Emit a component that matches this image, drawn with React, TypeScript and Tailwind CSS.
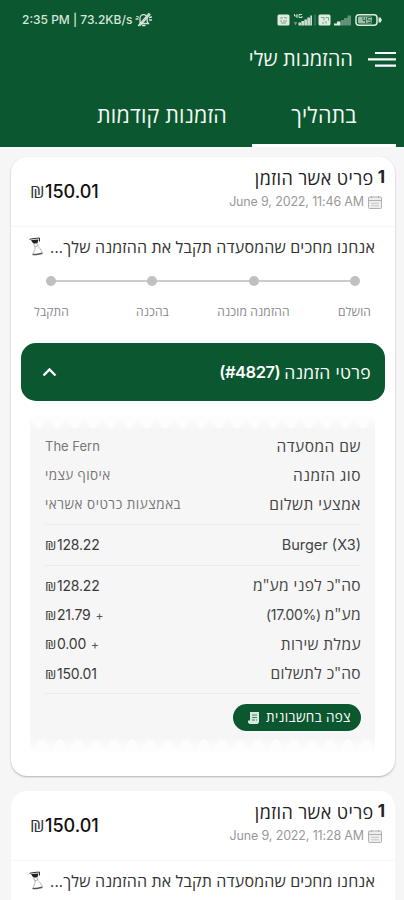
import { clsx } from 'clsx';

type Order = { date: string; open: boolean };

const orders: Order[] = [
  { date: 'June 9, 2022, 11:46 AM', open: true },
  { date: 'June 9, 2022, 11:28 AM', open: false },
];

const steps = ['הושלם', 'ההזמנה מוכנה', 'בהכנה', 'התקבל'];

const info = [
  { label: 'שם המסעדה', value: 'The Fern', cls: 'text-[13px] font-[Inter]' },
  { label: 'סוג הזמנה', value: 'איסוף עצמי', cls: 'text-[13.5px] tracking-[0.4px]' },
  { label: 'אמצעי תשלום', value: 'באמצעות כרטיס אשראי', cls: 'text-[13.5px] tracking-[0.52px]' },
];

const totals = [
  { label: 'סה"כ לפני מע"מ', rate: '', value: '128.22', plus: false },
  { label: 'מע"מ', rate: '(17.00%)', value: '21.79', plus: true },
  { label: 'עמלת שירות', rate: '', value: '0.00', plus: true },
  { label: 'סה"כ לתשלום', rate: '', value: '150.01', plus: false },
];

function BellOff() {
  return (
    <svg width="18" height="15" viewBox="0 0 18 15" fill="none" stroke="#d5e5da" strokeWidth="1.3" strokeLinecap="round">
      <path d="M5 11.5h8.5l-1.3-2V6.2a3.6 3.6 0 0 0-7.2 0v3.3zM7.5 13.5h2.5M3.5 13.5 14 1.5M1 7h2M1.8 4.5l1.6.5M14.5 5.5l2-.5M14.5 8h2" />
      <path d="m5 13.5 10-11" />
    </svg>
  );
}

function StatusIcons() {
  return (
    <svg width="106" height="14" viewBox="0 0 106 14" fill="#dfeae2">
      <rect x="0.5" y="1.5" width="12" height="11" rx="1.5" />
      <path d="M3 5h3M7 4.5l3 .5M3 8h2M6 8h4M4 10h5" stroke="#7aa38b" strokeWidth="1" fill="none" />
      <path d="M17.5 1v2h2.5M20 1v4M25 1.5h-3v3h3V3" stroke="#dfeae2" strokeWidth=".9" fill="none" />
      <path d="M17 9h3v1.500h-1V12h-1v-1.500h-1z" opacity=".45" />
      <path d="M21.500 9.500H24v3h-2.500zM24.300 8H27v4.500h-2.700zM27.300 6.500H30v6h-2.700zM30.300 4.500H33v8h-2.700zM33.300 2.500H35v10h-1.700z" opacity=".9" />
      <path d="M37.500 1.500h1v11h-1z" opacity=".35" />
      <rect x="41.500" y="1.500" width="12" height="11" rx="1.500" />
      <path d="M44 4.500h3v3M48.500 4.500h3v3M45 10h2M49 8v2.500" stroke="#7aa38b" strokeWidth="1" fill="none" />
      <path d="M57 10.500h3v2h-3zM60 8.500h3.500v4H60z" />
      <path d="M64 7h3v5.500h-3zM67 5h3.500v7.500H67zM70.500 2.500H74v10h-3.500z" opacity=".4" />
      <rect x="79" y="1.700" width="21" height="10.500" rx="3" fill="none" stroke="#dfeae2" strokeWidth="1.500" />
      <rect x="81" y="3.500" width="14" height="7" rx="1.500" opacity=".7" />
      <path d="M86 4v3.500h3M88.500 4.500v5.500M94 4.500h-3.500v2.500H94v2.500h-3.500" stroke="#2c6d4a" strokeWidth="1" fill="none" />
      <path d="M101.500 4.500h2l1.500 2.500-1.500 2.500h-2z" />
    </svg>
  );
}

function Calendar() {
  return (
    <svg width="14" height="13" viewBox="0 0 14 13" fill="none" stroke="#b0b0b0" strokeWidth="1">
      <rect x=".5" y="1" width="13" height="11.500" rx="1" fill="#eeeeee" />
      <path d="M.5 4.500h13M3.500 0v2M10.500 0v2" />
      <path d="M3 7.300h8M3 9.800h8" stroke="#c8c8c8" />
    </svg>
  );
}

// Takeaway waiter figure next to the status message
function Figure() {
  return (
    <svg width="15" height="19" viewBox="0 0 15 19" fill="none" stroke="#333" strokeLinejoin="round">
      <path d="M2 3 9.500 2.500 8.500 6 5.500 6.800 3.500 5.500z" fill="#222" stroke="none" />
      <path d="M.5 2.300 5 1.500 10.500 1M10.500 1v3.500" strokeWidth="1" />
      <path d="m4.500 6.500 1.500 3.500 3-1.500L7.500 6" strokeWidth=".7" stroke="#888" />
      <path d="M6 10v2.500l-2 4M9 9.500l2.300 2.300 2 4" strokeWidth=".8" stroke="#aaa" />
      <path d="M3.500 17.500h4l6-1.300" strokeWidth="1.400" stroke="#555" />
    </svg>
  );
}

function Scallops({ bottom }: { bottom?: boolean }) {
  return (
    <svg className={clsx('block', bottom && 'rotate-180')} width="345" height="14" viewBox="0 0 345 14">
      <defs>
        <pattern id="scallop" width="18" height="14" patternUnits="userSpaceOnUse">
          <path d="M0 0h18v3q-3 1-5 7-4 5-8 0Q3 4 0 3z" fill="#fdfdfd" />
        </pattern>
        <linearGradient id="fade" x1="0" y1="0" x2="0" y2="1">
          <stop offset="0" stopColor="#fdfdfd" />
          <stop offset="1" stopColor="#f6f6f6" />
        </linearGradient>
      </defs>
      <rect width="345" height="14" fill="url(#fade)" />
      <rect width="345" height="14" fill="url(#scallop)" />
    </svg>
  );
}

function Price({ value, plus }: { value: string; plus?: boolean }) {
  return (
    <span dir="ltr" className="flex items-baseline font-[Inter] text-[14px] tracking-[-0.2px] text-[#3a3a3a]">
      <span className="inline-block w-[12px] origin-left scale-x-115 font-['Open_Sans'] text-[12.5px]">₪</span>
      {value}
      {plus && <span className="ml-[5px] text-[12px] text-[#555]">+</span>}
    </span>
  );
}

function Receipt() {
  return (
    <div className="ml-[19px] mr-[20px] mt-[15px]">
      <Scallops />
      <div className="h-[308px] bg-[#f6f6f6] pl-[15px] pr-[14px]">
        <div className="flex h-[95px] flex-col border-b border-[#ebebeb] pt-[2px]">
          {info.map((row) => (
            <div key={row.label} className="flex h-[29px] items-center justify-between">
              <span className="text-[15.5px] tracking-[0.5px] text-[#444]">{row.label}</span>
              <span className={clsx('text-[#777]', row.cls)}>{row.value}</span>
            </div>
          ))}
        </div>
        <div className="flex h-[41px] items-center justify-between border-b border-[#ebebeb] text-[#444]">
          <span dir="ltr" className="font-[Inter] text-[14.5px]">Burger (X3)</span>
          <Price value="128.22" />
        </div>
        <div className="flex h-[128px] flex-col border-b border-[#ebebeb] pt-[5px]">
          {totals.map((row) => (
            <div key={row.label} className="flex h-[29.300px] items-center justify-between">
              <span className="flex items-center gap-[4px] text-[15.5px] tracking-[0.4px] text-[#444]">
                {row.label}
                {row.rate && <span dir="ltr" className="font-[Inter] text-[14px] tracking-[-0.3px]">{row.rate}</span>}
              </span>
              <Price value={row.value} plus={row.plus} />
            </div>
          ))}
        </div>
        <button className="mt-[10px] flex h-[27px] w-[128px] items-center justify-between whitespace-nowrap rounded-full bg-[#0b5730] pl-[15px] pr-[10px] text-[13.5px] font-medium tracking-[0.35px] text-white">
          <span>צפה בחשבונית</span>
          <svg width="11" height="12" viewBox="0 0 11 12">
            <path d="M2 0h9v10.500L9.500 12H1.500L0 10.500V8.500h2z" fill="#d8e8dc" />
            <path d="M4 3h5M4 5.500h5M4 8h3M8 8h1" stroke="#4a8265" strokeWidth="1" />
          </svg>
        </button>
      </div>
      <Scallops bottom />
    </div>
  );
}

function OrderCard({ order }: { order: Order }) {
  return (
    <article className={clsx('w-[384px] shrink-0 rounded-2xl bg-white', order.open ? 'h-[619px] shadow-[0_1px_2px_rgba(0,0,0,0.28)]' : 'h-[300px]')}>
      <div className="flex h-[70px] items-start justify-between border-b border-[#f7f7f7] pl-[19px] pr-[10px]">
        <div className="pt-[8px]">
          <div className="flex h-[26px] items-center gap-[4px] text-[#222]">
            <b className="font-[Inter] text-[17px] font-bold">1</b>
            <span className="text-[18px] tracking-[0.4px]">פריט אשר הוזמן</span>
          </div>
          <div className="flex h-[22px] items-center gap-[4px] pr-[3px]">
            <Calendar />
            <span dir="ltr" className="font-[Inter] text-[12.500px] tracking-[-0.150px] text-[#999]">{order.date}</span>
          </div>
        </div>
        <div dir="ltr" className="flex items-baseline pt-[22px] font-[Inter] text-[18px] font-medium leading-[26px] text-[#111]">
          <span className="inline-block w-[15px] origin-left scale-x-115 font-['Open_Sans'] text-[16px] font-normal text-[#333]">₪</span>
          150.01
        </div>
      </div>
      <div className="flex h-[39px] items-center justify-between pl-[18px] pr-[20px]">
        <span className="whitespace-nowrap text-[16px] tracking-[0.160px] text-[#333]">אנחנו מחכים שהמסעדה תקבל את ההזמנה שלך...</span>
        <Figure />
      </div>
      {order.open && (
        <>
          <div className="relative mx-[35px] mt-[10px] flex h-[10px] items-center justify-between">
            <div className="absolute inset-x-[5px] top-[4px] h-[2px] bg-[#cccccc]" />
            {steps.map((step) => (
              <i key={step} className="relative h-[10px] w-[10px] rounded-full bg-[#c0c0c0]" />
            ))}
          </div>
          <div className="-mx-[10px] mt-[16px] flex h-[20px] items-center text-[12px] tracking-[0.150px] text-[#888]">
            {steps.map((step) => (
              <span key={step} className="flex-1 whitespace-nowrap text-center">{step}</span>
            ))}
          </div>
          <button className="mx-[10px] mt-[21px] flex h-[58px] w-[364px] items-center justify-between rounded-[15px] bg-[#0b5730] pl-[21px] pr-[14px] text-[17px] font-semibold text-white">
            <span className="flex items-center gap-[4px]">
              <span className="text-[17.500px] font-medium tracking-[0.300px]">פרטי הזמנה</span>
              <span dir="ltr" className="font-[Inter] text-[16.500px] tracking-[-0.500px]">(#4827)</span>
            </span>
            <svg width="15" height="10" viewBox="0 0 15 10" fill="none" stroke="#fff" strokeWidth="2.400">
              <path d="m1.500 8.500 6-6 6 6" />
            </svg>
          </button>
          <Receipt />
        </>
      )}
    </article>
  );
}

export default function App() {
  return (
    <div dir="rtl" className="flex h-[900px] w-[404px] flex-col overflow-hidden bg-[#f6f6f6] font-['Open_Sans',sans-serif]">
      <header className="h-[147px] shrink-0 bg-[#0b5730] text-[#f4f8f4]">
        <div dir="ltr" className="flex h-[39px] items-center justify-between pl-[22px] pr-[21px]">
          <div className="flex items-center gap-[3px] font-[Inter] text-[12px] font-medium text-[#d5e5da]">
            <span>2:35 PM | 73.2KB/s</span>
            <BellOff />
          </div>
          <StatusIcons />
        </div>
        <div className="flex h-[40px] items-center gap-[15px] pr-[8px]">
          <svg width="28" height="16" viewBox="0 0 28 16" stroke="#fff" strokeWidth="2.200">
            <path d="M7 2h21M0 8.300h28M7 14.600h21" />
          </svg>
          <h1 className="text-[20px] font-medium tracking-[0.100px]">ההזמנות שלי</h1>
        </div>
        <nav className="flex h-[68px] pr-[8px] text-[21.500px] font-medium tracking-[0.150px]">
          <div className="flex w-[144px] items-center justify-center border-b-[3px] border-white pt-[7px]">בתהליך</div>
          <div className="flex w-[180px] items-center justify-center pt-[4px]">הזמנות קודמות</div>
        </nav>
      </header>
      <main className="flex flex-col gap-[15px] pr-[9px] pt-[10px]">
        {orders.map((order) => (
          <OrderCard key={order.date} order={order} />
        ))}
      </main>
    </div>
  );
}
